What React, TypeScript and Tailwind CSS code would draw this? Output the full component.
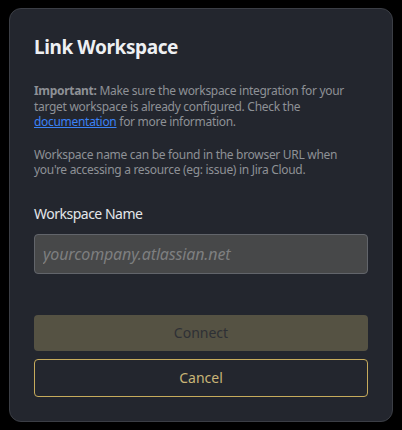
import React from 'react';

export default function App() {
  return (
    <div className="min-h-[430px] w-[402px] bg-black pt-[8px] pl-[9px] font-['Noto_Sans',sans-serif]">
      <div className="w-[384px] h-[414px] rounded-[12px] border border-[#3b3e45] bg-[#23262e] px-[24px] pt-[24px]">
        <h1 className="text-[19px] leading-[28px] font-bold tracking-[-0.4px] text-[#eef0f3]">Link Workspace</h1>

        <p className="mt-[22px] text-[12px] leading-[15.5px] tracking-[-0.3px] text-[#8e9196]">
          <span className="font-bold">Important:</span> Make sure the workspace integration for your
          target workspace is already configured. Check the{' '}
          <a className="text-[#3b82f6] underline">documentation</a> for more information.
        </p>

        <p className="mt-[17px] text-[12px] leading-[15.5px] tracking-[-0.3px] text-[#8e9196]">
          Workspace name can be found in the browser URL when you're accessing a resource (eg: issue) in Jira Cloud.
        </p>

        <label className="mt-[26px] block text-[14px] leading-[20px] tracking-[-0.5px] text-[#e4e6ea]">
          Workspace Name
        </label>

        <input
          className="mt-[10px] block h-[40px] w-[334px] rounded-[4px] border border-[#62656b] bg-[#474849] px-[8px] text-[16px] italic tracking-[-0.15px] text-[#d0d0d0] placeholder:text-[#7e7f80] outline-none"
          placeholder="yourcompany.atlassian.net"
        />

        <button className="mt-[41px] block h-[36px] w-[334px] rounded-[4px] bg-[#555243] text-[14px] text-[#2e3035]">
          Connect
        </button>
        <button className="mt-[8px] block h-[38px] w-[334px] rounded-[4px] border border-[#c6ab5c] bg-transparent text-[14px] text-[#c9b577]">
          Cancel
        </button>
      </div>
    </div>
  );
}
